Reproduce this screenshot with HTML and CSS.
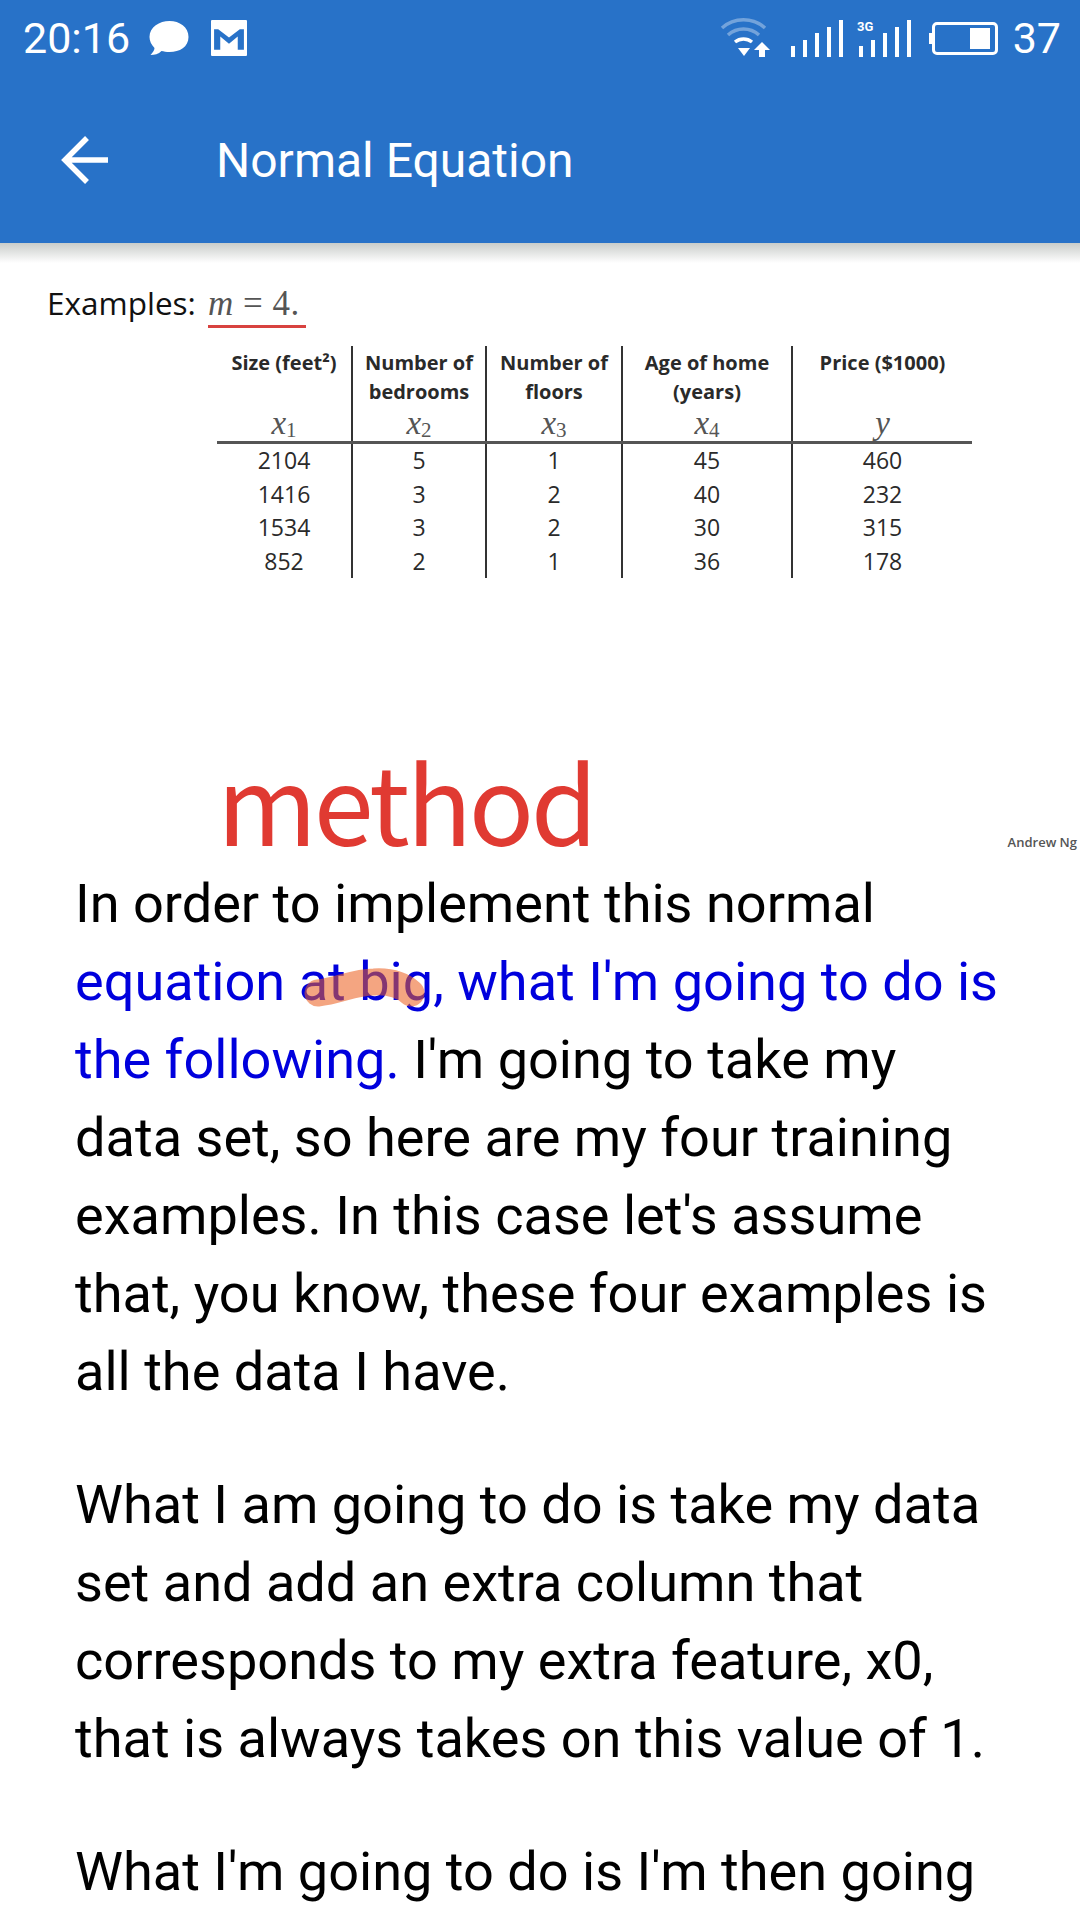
FILE: index.html
```html
<!DOCTYPE html>
<html lang="en">

<head>
    <meta charset="UTF-8">
    <meta name="viewport" content="width=device-width, initial-scale=1.0">
    <title>Normal Equation</title>
    <link rel="stylesheet" href="styles.css">
</head>

<body>
    <header class="appbar">
        <div class="status-bar">
            <div class="status-left">
                <span class="clock">20:16</span>
                <svg class="icon-chat" width="40" height="36" viewBox="0 0 39 36">
                    <path fill="#fff" d="M20 1C30 1 39 7 39 17C39 27 30 32 20 32C17 32 14 31.500 12 31C9 34 5 35 1 35C3 33 5 30 5 28C2 25 0 21 0 17C0 7 10 1 20 1Z" />
                </svg>
                <svg class="icon-mail" width="36" height="36" viewBox="0 0 35 35">
                    <path fill="#fff" fill-rule="evenodd" d="M1 0H34Q35 0 35 1V34Q35 35 34 35H1Q0 35 0 34V1Q0 0 1 0ZM3 9V29H9V16L17.500 23L26 16V29H32V9H28L17.500 17L7 9Z" />
                </svg>
            </div>
            <div class="status-right">
                <svg class="icon-wifi" width="50" height="40" viewBox="0 0 50 40">
                    <g fill="none" stroke="#fff" stroke-width="3.500">
                        <path opacity=".35" d="M2 10C14 -1 33 -1 45 10" />
                        <path opacity=".35" d="M8 17C17 9 30 9 39 17" />
                        <path d="M15 24C20 20 27 20 32 24" />
                    </g>
                    <path fill="#fff" d="M18 30H30L24 38ZM42 24L50 32H45V39H39V32H34Z" />
                </svg>
                <svg class="icon-signal" width="52" height="37" viewBox="0 0 52 37">
                    <path fill="#fff" d="M0 26H4V37H0ZM12 20H16V37H12ZM24 13H28V37H24ZM36 7H40V37H36ZM48 0H52V37H48Z" />
                </svg>
                <svg class="icon-signal-3g" width="54" height="38" viewBox="0 0 54 38">
                    <text class="net-label" x="0" y="12">3G</text>
                    <path fill="#fff" d="M2 27H6V38H2ZM14 21H18V38H14ZM26 14H30V38H26ZM38 8H42V38H38ZM50 1H54V38H50Z" />
                </svg>
                <div class="battery">
                    <div class="battery-fill"></div>
                </div>
                <span class="battery-level">37</span>
            </div>
        </div>
        <div class="toolbar">
            <svg class="icon-back" width="48" height="48" viewBox="0 0 48 48">
                <path fill="none" stroke="#fff" stroke-width="5.500" d="M49 24H5M27 2L5 24L27 46" />
            </svg>
            <h1 class="title">Normal Equation</h1>
        </div>
    </header>
    <div class="appbar-shadow"></div>

    <section class="slide">
        <p class="slide-heading">Examples: <span class="math-note"><i>m</i> = 4.</span></p>
        <table class="houses">
            <colgroup>
                <col class="col-size">
                <col class="col-bed">
                <col class="col-floor">
                <col class="col-age">
                <col class="col-price">
            </colgroup>
            <thead>
                <tr class="head-row">
                    <th>Size (feet²)</th>
                    <th>Number of<br>bedrooms</th>
                    <th>Number of<br>floors</th>
                    <th>Age of home<br>(years)</th>
                    <th>Price ($1000)</th>
                </tr>
                <tr class="symbol-row">
                    <td><i>x</i><sub>1</sub></td>
                    <td><i>x</i><sub>2</sub></td>
                    <td><i>x</i><sub>3</sub></td>
                    <td><i>x</i><sub>4</sub></td>
                    <td><i>y</i></td>
                </tr>
            </thead>
            <tbody>
                <tr><td>2104</td><td>5</td><td>1</td><td>45</td><td>460</td></tr>
                <tr><td>1416</td><td>3</td><td>2</td><td>40</td><td>232</td></tr>
                <tr><td>1534</td><td>3</td><td>2</td><td>30</td><td>315</td></tr>
                <tr><td>852</td><td>2</td><td>1</td><td>36</td><td>178</td></tr>
            </tbody>
        </table>
        <div class="caption">method</div>
        <div class="credit">Andrew Ng</div>
    </section>

    <main class="transcript">
        <p>In order to implement this normal <span class="current">equation <span class="marked">at big<svg class="marker" width="124" height="42" viewBox="0 0 124 42"><path fill="none" stroke="#ec5f20" stroke-width="27" stroke-linecap="round" stroke-linejoin="round" d="M16 26C36 24 52 15 72 15C88 14 100 18 109 26" /></svg></span>, what I'm going to do is the following.</span> I'm going to take my data set, so here are my four training examples. In this case let's assume that, you know, these four examples is all the data I have.</p>
        <p>What I am going to do is take my data set and add an extra column that corresponds to my extra feature, x0, that is always takes on this value of 1.</p>
        <p>What I'm going to do is I'm then going</p>
    </main>
</body>

</html>
```

FILE: styles.css
```css
html,
body {
    height: 1920px;
    overflow: hidden;
}

body {
    margin: 0;
    background-color: #fff;
    color: #000;
    font-family: Roboto, sans-serif;
}

.appbar {
    height: 243px;
    background-color: #2872c8;
    color: #fff;
}

.appbar-shadow {
    height: 20px;
    margin-bottom: -20px;
    background: linear-gradient(#c9cdca, #fff);
}

.status-bar {
    display: flex;
    justify-content: space-between;
    align-items: center;
    height: 76px;
    padding: 0 19px 0 23px;
}

.status-left,
.status-right {
    display: flex;
    align-items: center;
}

.clock,
.battery-level {
    font-size: 43px;
    font-weight: 400;
}

.icon-chat {
    margin-left: 19px;
}

.icon-mail {
    margin-left: 22px;
}

.icon-signal {
    margin-left: 21px;
}

.icon-signal-3g {
    margin-left: 14px;
}

.net-label {
    fill: #fff;
    font-size: 13px;
    font-weight: 700;
}

.battery {
    position: relative;
    display: flex;
    justify-content: flex-end;
    align-items: center;
    box-sizing: border-box;
    width: 66px;
    height: 33px;
    margin-left: 21px;
    padding-right: 5px;
    border: 3px solid #fff;
    border-radius: 5px;
}

.battery::before {
    content: "";
    position: absolute;
    left: -6px;
    top: 8px;
    width: 3px;
    height: 11px;
    background-color: #fff;
}

.battery-fill {
    width: 20px;
    height: 21px;
    background-color: #fff;
}

.battery-level {
    margin-left: 15px;
}

.toolbar {
    display: flex;
    align-items: center;
    height: 167px;
    padding-left: 60px;
}

.title {
    margin: 2px 0 0 108px;
    font-size: 48px;
    font-weight: 400;
}

.slide {
    position: relative;
    height: 622px;
    box-sizing: border-box;
    padding: 42px 0 0 47px;
}

.slide-heading {
    margin: 0;
    font-family: "Open Sans", sans-serif;
    font-size: 31.500px;
    line-height: 36px;
    color: #111;
}

.math-note {
    display: inline-block;
    margin-left: 4px;
    padding: 0 6px 3px 0;
    border-bottom: 3px solid #d8423f;
    font-family: "Liberation Serif", serif;
    font-size: 35px;
    letter-spacing: 0.5px;
    color: #555;
}

.houses {
    margin: 18px 0 0 170px;
    border-collapse: collapse;
    table-layout: fixed;
    width: 755px;
    font-family: "Open Sans", sans-serif;
    font-size: 23px;
    color: #2a2a2a;
    text-align: center;
}

.col-size {
    width: 135px;
}

.col-bed {
    width: 134px;
}

.col-floor {
    width: 136px;
}

.col-age {
    width: 170px;
}

.col-price {
    width: 180px;
}

.houses th,
.houses td {
    padding: 0;
    border-left: 2px solid #333;
}

.houses th:first-child,
.houses td:first-child {
    border-left: 0;
}

.houses th {
    height: 62px;
    padding-top: 2px;
    vertical-align: top;
    font-size: 20px;
    font-weight: 700;
    line-height: 29px;
}

.houses .symbol-row td {
    height: 27px;
    padding-bottom: 4px;
    border-bottom: 3px solid #555;
    font-family: "Liberation Serif", serif;
    font-size: 33px;
    line-height: 27px;
    color: #555;
}

.symbol-row sub {
    font-size: 21px;
    line-height: 0;
    vertical-align: -3px;
}

.houses tbody td {
    height: 33.500px;
    line-height: 33px;
}

.caption {
    position: absolute;
    left: 217px;
    top: 491px;
    font-family: "Noto Sans CJK SC", "Noto Sans", sans-serif;
    font-size: 108px;
    letter-spacing: -3.300px;
    line-height: 130px;
    color: #e03a32;
}

.credit {
    position: absolute;
    right: 3px;
    top: 590px;
    font-family: "Open Sans", sans-serif;
    font-size: 13px;
    font-weight: 600;
    color: #555;
}

.transcript {
    padding: 0 70px 0 75px;
    font-size: 54.100px;
    line-height: 78px;
}

.transcript p {
    margin: 0 0 55px;
}

.current {
    color: #0000dd;
}

.marked {
    position: relative;
}

.marker {
    position: absolute;
    left: 3px;
    top: 17px;
    opacity: 0.56;
}
```
